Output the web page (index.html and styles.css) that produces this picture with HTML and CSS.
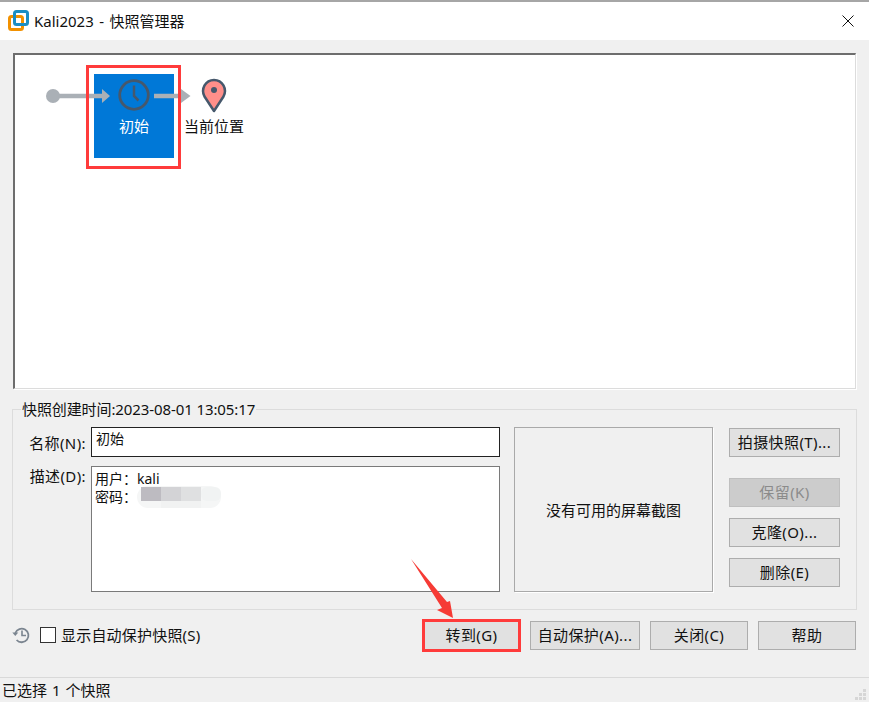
FILE: index.html
```html
<!DOCTYPE html>
<html lang="zh-CN">
<head>
<meta charset="utf-8">
<title>Kali2023 - 快照管理器</title>
<link rel="stylesheet" href="styles.css">
</head>
<body>
<div class="window">
  <header class="titlebar">
    <svg class="logo" width="22" height="22" viewBox="0 0 22 22">
      <rect x="1.5" y="6.5" width="13" height="13" rx="2" fill="none" stroke="#f29100" stroke-width="3"/>
      <rect x="6.5" y="1.5" width="13" height="13" rx="2" fill="none" stroke="#1b8ec4" stroke-width="3"/>
    </svg>
    <span class="title">Kali2023 - 快照管理器</span>
    <svg class="close" width="12" height="12" viewBox="0 0 12 12">
      <path d="M0.5 0.5L11.5 11.5M11.5 0.5L0.5 11.5" stroke="#111" stroke-width="1" fill="none"/>
    </svg>
  </header>

  <div class="canvas">
    <div class="node current">
      <svg class="clock" width="34" height="34" viewBox="0 0 34 34">
        <circle cx="17" cy="17" r="14.3" fill="none" stroke="#46586c" stroke-width="2.8"/>
        <path d="M17 7.5V18L21.5 22.5" fill="none" stroke="#46586c" stroke-width="2.5"/>
      </svg>
      <span class="node-label">初始</span>
    </div>
    <svg class="tree" width="200" height="60" viewBox="0 0 200 60">
      <circle cx="9" cy="41" r="7" fill="#aab0b6"/>
      <path d="M14 41H60" stroke="#aab0b6" stroke-width="4.5"/>
      <path d="M58 34L66 41L58 48Z" fill="#aab0b6"/>
    </svg>
    <svg class="link" width="40" height="20" viewBox="0 0 40 20">
      <path d="M0 10H30" stroke="#aab0b6" stroke-width="4.5"/>
      <path d="M27 3L36.500 10L27 17Z" fill="#aab0b6"/>
    </svg>
    <svg class="pin" width="26" height="36" viewBox="0 0 26 36">
      <path d="M13 33L3.500 18.500C-0.500 11 4.500 2 13 2C21.500 2 26.500 11 22.500 18.500Z" fill="#ff8f8a" stroke="#46586c" stroke-width="2.500" stroke-linejoin="round"/>
      <circle cx="13" cy="12" r="3" fill="#46586c"/>
    </svg>
    <span class="here">当前位置</span>
    <div class="mark-node"></div>
  </div>

  <section class="group">
    <div class="legend">快照创建时间:2023-08-01 13:05:17</div>
    <div class="fields">
      <label class="field-label name-label">名称(N):</label>
      <div class="input name">初始</div>
      <label class="field-label">描述(D):</label>
      <div class="input desc">用户：kali<br>密码：
        <svg class="blur" width="84" height="24" viewBox="0 0 84 24">
          <rect x="0" y="1" width="84" height="22" rx="11" fill="#f5f6f6"/>
          <rect x="4" y="2" width="20" height="14" fill="#bdbbc1"/>
          <rect x="24" y="2" width="20" height="14" fill="#d3d3d6"/>
          <rect x="44" y="2" width="20" height="14" fill="#dfe0e1"/>
          <rect x="64" y="2" width="20" height="14" rx="6" fill="#f1f3f3"/>
          <rect x="24" y="16" width="40" height="7" fill="#f1f2f2"/>
        </svg>
      </div>
    </div>
    <div class="shot">没有可用的屏幕截图</div>
    <div class="actions">
      <button class="btn">拍摄快照(T)...</button>
      <button class="btn disabled">保留(K)</button>
      <button class="btn">克隆(O)...</button>
      <button class="btn">删除(E)</button>
    </div>
  </section>

  <div class="footer">
    <svg class="history" width="18" height="18" viewBox="0 0 18 18">
      <path d="M3.300 7A6.800 6.800 0 1 1 4.600 14" fill="none" stroke="#7b8590" stroke-width="1.800"/>
      <path d="M0.300 6.500H6.300L3.300 10Z" fill="#7b8590"/>
      <path d="M10 4.500V9.500H14" fill="none" stroke="#7b8590" stroke-width="1.600"/>
    </svg>
    <span class="checkbox"></span>
    <span class="check-label">显示自动保护快照(S)</span>
    <button class="btn go">转到(G)</button>
    <button class="btn auto">自动保护(A)...</button>
    <button class="btn close-btn">关闭(C)</button>
    <button class="btn help">帮助</button>
  </div>

  <footer class="status">
    <span>已选择 1 个快照</span>
    <svg class="grip" width="12" height="11" viewBox="0 0 12 11">
      <path d="M8 0h3v3H8zM4 4h3v3H4zM8 4h3v3H8zM0 8h3v3H0zM4 8h3v3H4zM8 8h3v3H8z" fill="#d6d6d6"/>
    </svg>
  </footer>

  <svg class="pointer" width="50" height="64" viewBox="0 0 50 64">
    <path d="M1 1L37 44L40 43L43 60L27 52L32 50Z" fill="#f63b35"/>
  </svg>
</div>
</body>
</html>
```

FILE: styles.css
```css
* { box-sizing: border-box; }
html, body { margin: 0; padding: 0; }
body {
  width: 869px;
  height: 702px;
  overflow: hidden;
  background: #f0f0f0;
  color: #111;
  font-family: "Noto Sans", "Noto Sans CJK SC", sans-serif;
  font-size: 15px;
}
.window {
  position: relative;
  display: flex;
  flex-direction: column;
  width: 869px;
  height: 702px;
  border-top: 2px solid #a6a6a6;
}
.titlebar {
  display: flex;
  align-items: center;
  height: 38px;
  padding-left: 8px;
  padding-right: 15px;
  background: #fff;
  flex: none;
}
.logo { flex: none; }
.title { margin-left: 4px; line-height: 38px; word-spacing: 1.5px; }
.close { margin-left: auto; }

.canvas {
  position: relative;
  flex: none;
  width: 843px;
  height: 336px;
  margin: 13px 0 0 13px;
  background: #fff;
  border-top: 2px solid #6d6d6d;
  border-left: 2px solid #6d6d6d;
  border-right: 1px solid #dcdcdc;
  border-bottom: 1px solid #dcdcdc;
  box-shadow: 1px 1px 0 #fff;
}
.tree { position: absolute; left: 29px; top: 0; }
.node.current {
  position: absolute;
  left: 79px;
  top: 19px;
  width: 80px;
  height: 84px;
  background: #0078d7;
}
.clock { position: absolute; left: 23px; top: 4px; }
.node-label {
  position: absolute;
  left: 0;
  right: 0;
  top: 41px;
  color: #fff;
  text-align: center;
  line-height: 22px;
}
.link { position: absolute; left: 139px; top: 31px; }
.pin { position: absolute; left: 186px; top: 23px; }
.here {
  position: absolute;
  left: 169px;
  top: 60px;
  line-height: 22px;
  white-space: nowrap;
}
.mark-node {
  position: absolute;
  left: 71px;
  top: 10px;
  width: 95px;
  height: 104px;
  border: 3px solid #ff3b3b;
}

.group {
  position: relative;
  display: flex;
  flex: none;
  width: 845px;
  height: 201px;
  margin: 20px 0 0 12px;
  padding-top: 17px;
  border: 1px solid #dcdcdc;
}
.legend {
  position: absolute;
  left: 8px;
  top: -9px;
  padding: 0 1px;
  background: #f0f0f0;
  line-height: 17px;
  letter-spacing: -0.1px;
  white-space: nowrap;
}
.fields {
  display: grid;
  grid-template-columns: 73px 409px;
  grid-template-rows: 30px 126px;
  column-gap: 5px;
  row-gap: 9px;
}
.field-label {
  text-align: right;
  line-height: 20px;
  letter-spacing: 0.4px;
}
.field-label.name-label { padding-top: 6px; }
.input {
  background: #fff;
  padding: 1px 5px 0 3px;
  font-size: 14px;
  line-height: 18px;
}
.input.name {
  border: 1px solid #222;
  padding-left: 4px;
  padding-top: 2px;
}
.input.desc {
  position: relative;
  border: 1px solid #7a7a7a;
  padding-top: 3px;
}
.blur { position: absolute; left: 45px; top: 18px; }
.shot {
  display: flex;
  align-items: center;
  justify-content: center;
  width: 199px;
  height: 165px;
  margin-left: 14px;
  border: 1px solid #a9a9a9;
  box-shadow: 1px 1px 0 #fff;
}
.actions {
  display: flex;
  flex-direction: column;
  width: 111px;
  margin: 1px 0 0 16px;
  gap: 11px;
}
.btn {
  display: block;
  height: 29px;
  padding: 0;
  border: 1px solid #adadad;
  border-radius: 0;
  background: #e1e1e1;
  color: #111;
  font-family: inherit;
  font-size: 15px;
  line-height: 27px;
  letter-spacing: 0.4px;
  text-align: center;
  white-space: nowrap;
}
.btn.disabled {
  margin-top: 10px;
  background: #cccccc;
  border-color: #bfbfbf;
  color: #8b8b8b;
}
.footer {
  display: flex;
  align-items: center;
  flex: none;
  height: 28px;
  margin-top: 11px;
  padding-left: 12px;
}
.history { flex: none; }
.checkbox {
  flex: none;
  width: 16px;
  height: 16px;
  margin-left: 10px;
  border: 1px solid #333;
  background: #fff;
}
.check-label { margin-left: 5px; padding-bottom: 2px; letter-spacing: 0.2px; white-space: nowrap; }
.btn.go {
  width: 95px;
  margin-left: auto;
  outline: 3px solid #ff3b3b;
  outline-offset: -1px;
}
.btn.auto { width: 110px; margin-left: 11px; }
.btn.close-btn { width: 98px; margin-left: 10px; }
.btn.help { width: 98px; margin-left: 10px; margin-right: 13px; }
.status {
  display: flex;
  align-items: center;
  justify-content: space-between;
  flex: 1;
  margin-top: 28px;
  padding: 0 2px 0 2px;
  border-top: 1px solid #d9d9d9;
  line-height: 24px;
  word-spacing: 1px;
}
.grip { align-self: flex-end; margin-bottom: 2px; }
.pointer {
  position: absolute;
  left: 410px;
  top: 556px;
}
```
